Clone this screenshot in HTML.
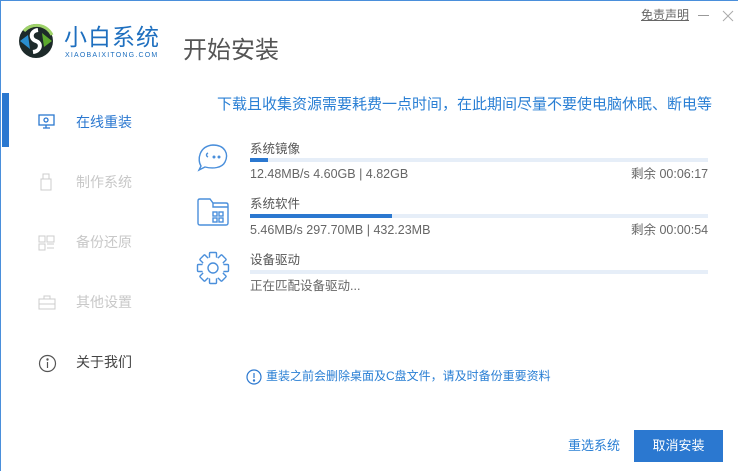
<!DOCTYPE html>
<html><head><meta charset="utf-8"><style>
body{margin:0;width:738px;height:471px;overflow:hidden;background:#fff;font-family:"Liberation Sans","Noto Sans CJK SC",sans-serif;position:relative}
.a{position:absolute;white-space:nowrap;line-height:1.2}
.bar{position:absolute;left:250px;width:458px;height:4px;background:#e6eef8}
.bar i{display:block;height:4px;background:#2b78d0}
.t{font-size:12.5px;color:#555}
.s{font-size:12.5px;color:#666}
.m{font-size:14px}
</style></head><body>
<div class="a" style="left:0;top:0;width:738px;height:1px;background:#4a8fdb"></div>
<div class="a" style="left:0;top:0;width:1px;height:471px;background:#4a8fdb"></div>
<svg class="a" style="left:16px;top:21px" width="40" height="40" viewBox="0 0 40 40">
<circle cx="20" cy="20" r="17" fill="#1d2a2a"/>
<path d="M8 10 A17 17 0 0 1 36 14" stroke="#9fd36a" stroke-width="3" fill="none"/>
<path d="M26 12 L36 20 L28 26 Z" fill="#5caa2e"/>
<path d="M14 28 L4 20 L12 14 Z" fill="#2a8fd0"/>
<path d="M22 9 C14 10 14 18 20 20 C26 22 25 30 17 31" stroke="#fff" stroke-width="4" fill="none"/>
</svg>
<div class="a" style="left:64px;top:24px;font-size:23px;line-height:26px;color:#1e6fbf;letter-spacing:1px">小白系统</div>
<div class="a" style="left:65px;top:52px;font-size:7px;color:#1e6fbf;letter-spacing:1.2px">XIAOBAIXITONG.COM</div>
<div class="a" style="left:183px;top:37px;font-size:24px;color:#555">开始安装</div>
<div class="a" style="left:641px;top:8px;font-size:12px;color:#666;text-decoration:underline">免责声明</div>
<div class="a" style="left:698px;top:15px;width:11px;height:1px;background:#999"></div>
<svg class="a" style="left:722px;top:10px" width="12" height="12" viewBox="0 0 12 12" stroke="#aaa" stroke-width="1"><path d="M1 1L11 11M11 1L1 11"/></svg>
<div class="a" style="left:2px;top:93px;width:7px;height:54px;background:#2b78d0"></div>
<svg class="a" style="left:38px;top:114px" width="18" height="16" viewBox="0 0 18 16" fill="none" stroke="#2b78d0" stroke-width="1.3"><rect x="1" y="1" width="15" height="10"/><path d="M8 11v3M5 14h7"/><circle cx="8" cy="6" r="2"/></svg>
<div class="a m" style="left:76px;top:114px;color:#2b78d0">在线重装</div>
<svg class="a" style="left:40px;top:173px" width="12" height="18" viewBox="0 0 12 18" fill="none" stroke="#ccc"><rect x="1" y="6" width="10" height="11"/><rect x="3" y="1" width="6" height="5"/></svg>
<div class="a m" style="left:76px;top:174px;color:#c8c8c8">制作系统</div>
<svg class="a" style="left:38px;top:235px" width="18" height="16" viewBox="0 0 18 16" fill="none" stroke="#ccc"><rect x="1" y="1" width="6" height="6"/><rect x="1" y="9" width="6" height="6"/><rect x="9" y="1" width="7" height="6"/><path d="M9 9h7M9 13h7"/></svg>
<div class="a m" style="left:76px;top:234px;color:#c8c8c8">备份还原</div>
<svg class="a" style="left:38px;top:295px" width="18" height="15" viewBox="0 0 18 15" fill="none" stroke="#ccc"><rect x="1" y="4" width="16" height="10"/><path d="M6 4V1h6v3M1 9h16"/></svg>
<div class="a m" style="left:76px;top:294px;color:#c8c8c8">其他设置</div>
<svg class="a" style="left:38px;top:354px" width="19" height="19" viewBox="0 0 19 19" fill="none" stroke="#555" stroke-width="1.2"><circle cx="9.5" cy="9.5" r="8"/><path d="M9.5 8v6"/><circle cx="9.5" cy="5.5" r=".6" fill="#555"/></svg>
<div class="a m" style="left:76px;top:354px;color:#444">关于我们</div>
<div class="a" style="left:217px;top:96px;font-size:15px;color:#2a7fd4">下载且收集资源需要耗费一点时间，在此期间尽量不要使电脑休眠、断电等</div>
<svg class="a" style="left:195px;top:140px" width="36" height="36" viewBox="0 0 36 36" fill="none" stroke="#4a8fdb" stroke-width="1.4"><path d="M6 26 C2 20 4 6 18 5 C30 5 34 14 30 22 C27 28 18 29 10 27 L4 30 Z"/><path d="M13 17 C11 16 11 14 13 13"/><circle cx="19" cy="17" r=".8" fill="#4a8fdb"/><circle cx="24" cy="17" r=".8" fill="#4a8fdb"/></svg>
<div class="a t" style="left:250px;top:142px">系统镜像</div>
<div class="bar" style="top:158px"><i style="width:18px"></i></div>
<div class="a s" style="left:250px;top:167px">12.48MB/s 4.60GB | 4.82GB</div>
<div class="a s" style="left:631px;top:167px">剩余 00:06:17</div>
<svg class="a" style="left:196px;top:197px" width="34" height="30" viewBox="0 0 34 30" fill="none" stroke="#4a8fdb" stroke-width="1.4"><path d="M2 4 Q2 2 4 2 H14 L17 6 H30 Q32 6 32 8 V26 Q32 28 30 28 H4 Q2 28 2 26 Z"/><path d="M17 6 V10 H32"/><rect x="17" y="15" width="4" height="4"/><rect x="23" y="15" width="4" height="4"/><rect x="17" y="21" width="4" height="4"/><rect x="23" y="21" width="4" height="4"/></svg>
<div class="a t" style="left:250px;top:197px">系统软件</div>
<div class="bar" style="top:214px"><i style="width:142px"></i></div>
<div class="a s" style="left:250px;top:223px">5.46MB/s 297.70MB | 432.23MB</div>
<div class="a s" style="left:631px;top:223px">剩余 00:00:54</div>
<svg class="a" style="left:196px;top:251px" width="34" height="34" viewBox="-17 -17 34 34" fill="#fff" stroke="#4a8fdb" stroke-width="1.4">
<g><rect x="-3.5" y="-15.5" width="7" height="6" rx="1"/><rect x="-3.5" y="-15.5" width="7" height="6" rx="1" transform="rotate(45)"/><rect x="-3.5" y="-15.5" width="7" height="6" rx="1" transform="rotate(90)"/><rect x="-3.5" y="-15.5" width="7" height="6" rx="1" transform="rotate(135)"/><rect x="-3.5" y="-15.5" width="7" height="6" rx="1" transform="rotate(180)"/><rect x="-3.5" y="-15.5" width="7" height="6" rx="1" transform="rotate(225)"/><rect x="-3.5" y="-15.5" width="7" height="6" rx="1" transform="rotate(270)"/><rect x="-3.5" y="-15.5" width="7" height="6" rx="1" transform="rotate(315)"/></g>
<circle r="11" stroke="none"/><path d="M-2.2 -11 A11 11 0 0 1 2.2 -11" fill="none" stroke="none"/>
<circle r="5" fill="none"/></svg>
<div class="a t" style="left:250px;top:253px">设备驱动</div>
<div class="bar" style="top:270px"><i style="width:0"></i></div>
<div class="a s" style="left:250px;top:279px">正在匹配设备驱动...</div>
<svg class="a" style="left:246px;top:369px" width="16" height="16" viewBox="0 0 16 16" fill="none" stroke="#2b78d0" stroke-width="1.2"><circle cx="8" cy="8" r="7"/><path d="M8 4v5"/><circle cx="8" cy="11.5" r=".6" fill="#2b78d0"/></svg>
<div class="a" style="left:266px;top:369px;font-size:12px;color:#2a7fd4">重装之前会删除桌面及C盘文件，请及时备份重要资料</div>
<div class="a" style="left:568px;top:438px;font-size:13px;color:#2a7fd4">重选系统</div>
<div class="a" style="left:634px;top:430px;width:89px;height:32px;background:#2b78d0;color:#fff;font-size:13px;line-height:32px;text-align:center">取消安装</div>
</body></html>
